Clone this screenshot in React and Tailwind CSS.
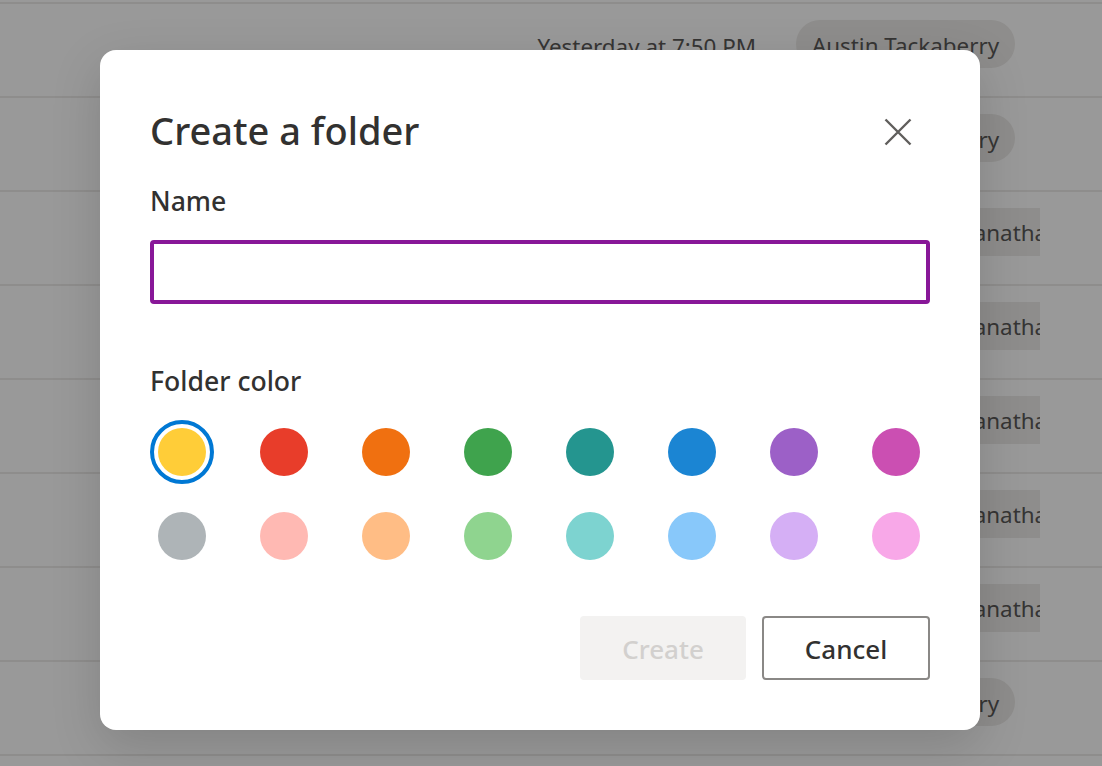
const FONT = "font-['Noto_Sans','Open_Sans',sans-serif]";

const top = ["#ffcd38", "#e83d2a", "#f07010", "#3fa34d", "#24958f", "#1b85d3", "#9c60c7", "#cb4fb2"];
const bottom = ["#aeb4b7", "#ffb9b3", "#ffbd85", "#8fd48f", "#7dd3d0", "#88c8fa", "#d5aff5", "#f8a8e8"];

function Pill() {
  return (
    <div className="flex h-12 w-[219px] items-center justify-center whitespace-nowrap rounded-full bg-[#edebe9] pt-[4px] text-[22.4px] text-[#5a5958]">
      Austin Tackaberry
    </div>
  );
}

function Square() {
  return (
    <div className="flex h-12 w-[219px] items-center justify-end overflow-hidden whitespace-nowrap bg-[#edebe9] pt-[2px] text-[22.4px] text-[#5a5958]">
      <span className="-mr-[21px] shrink-0">Janathan</span>
    </div>
  );
}

function Row({ children, time }) {
  return (
    <div className="flex h-[94px] shrink-0 items-start justify-end gap-10 border-t-2 border-[#edebe9] pt-[16px] pr-[87px]">
      {time && <span className="pt-[10px] text-[22.4px] text-[#5a5958]">{time}</span>}
      {children}
    </div>
  );
}

function SquareRow() {
  return (
    <div className="flex h-[94px] shrink-0 items-start justify-end border-t-2 border-[#edebe9] pt-[16px] pr-[62px]">
      <Square />
    </div>
  );
}

function Swatch({ color, selected }) {
  return (
    <div className={`flex h-16 w-16 items-center justify-center rounded-full ${selected ? "border-4 border-[#0078d4]" : ""}`}>
      <div className="h-12 w-12 rounded-full" style={{ backgroundColor: color }} />
    </div>
  );
}

export default function App() {
  return (
    <div className={`relative h-[766px] w-full overflow-hidden bg-white ${FONT}`}>
      <div className="flex h-full flex-col pt-[2px]">
        <Row time="Yesterday at 7:50 PM"><Pill /></Row>
        <Row><Pill /></Row>
        <SquareRow />
        <SquareRow />
        <SquareRow />
        <SquareRow />
        <SquareRow />
        <Row><Pill /></Row>
        <Row />
      </div>

      <div className="absolute inset-0 bg-black/40" />

      <div className="absolute left-[100px] top-[50px] flex h-[680px] w-[880px] flex-col rounded-2xl bg-white px-[50px] shadow-[0_16px_50px_rgba(0,0,0,0.15)]">
        <div className="flex h-[112px] items-end justify-between pr-[18px]">
          <h1 className="mb-[9px] text-[38px] font-medium leading-[46px] text-[#323130]">Create a folder</h1>
          <svg width="28" height="28" viewBox="0 0 28 28" className="mb-[16px] text-[#605e5c]" fill="none" stroke="currentColor" strokeWidth="2.4">
            <path d="M1.5 1.5 26.5 26.5M26.5 1.5 1.5 26.5" />
          </svg>
        </div>
        <label className="mt-[21px] text-[26.6px] font-medium leading-[36px] text-[#323130]">Name</label>
        <div className="mt-[21px] h-16 w-[780px] rounded border-4 border-[#881798]" />
        <label className="mt-[59px] text-[26.6px] font-medium leading-[36px] text-[#323130]">Folder color</label>
        <div className="mt-[21px] flex gap-[38px]">
          {top.map((c, i) => <Swatch key={c} color={c} selected={i === 0} />)}
        </div>
        <div className="mt-[20px] flex gap-[38px]">
          {bottom.map((c) => <Swatch key={c} color={c} />)}
        </div>
        <div className="mt-[48px] flex justify-end gap-4">
          <button className="h-16 w-[166px] rounded bg-[#f3f2f1] pt-[2px] text-[26px] font-medium text-[#d2d0ce]">Create</button>
          <button className="h-16 w-[168px] rounded border-2 border-[#8a8886] bg-white pt-[2px] text-[26px] font-medium text-[#323130]">Cancel</button>
        </div>
      </div>
    </div>
  );
}
